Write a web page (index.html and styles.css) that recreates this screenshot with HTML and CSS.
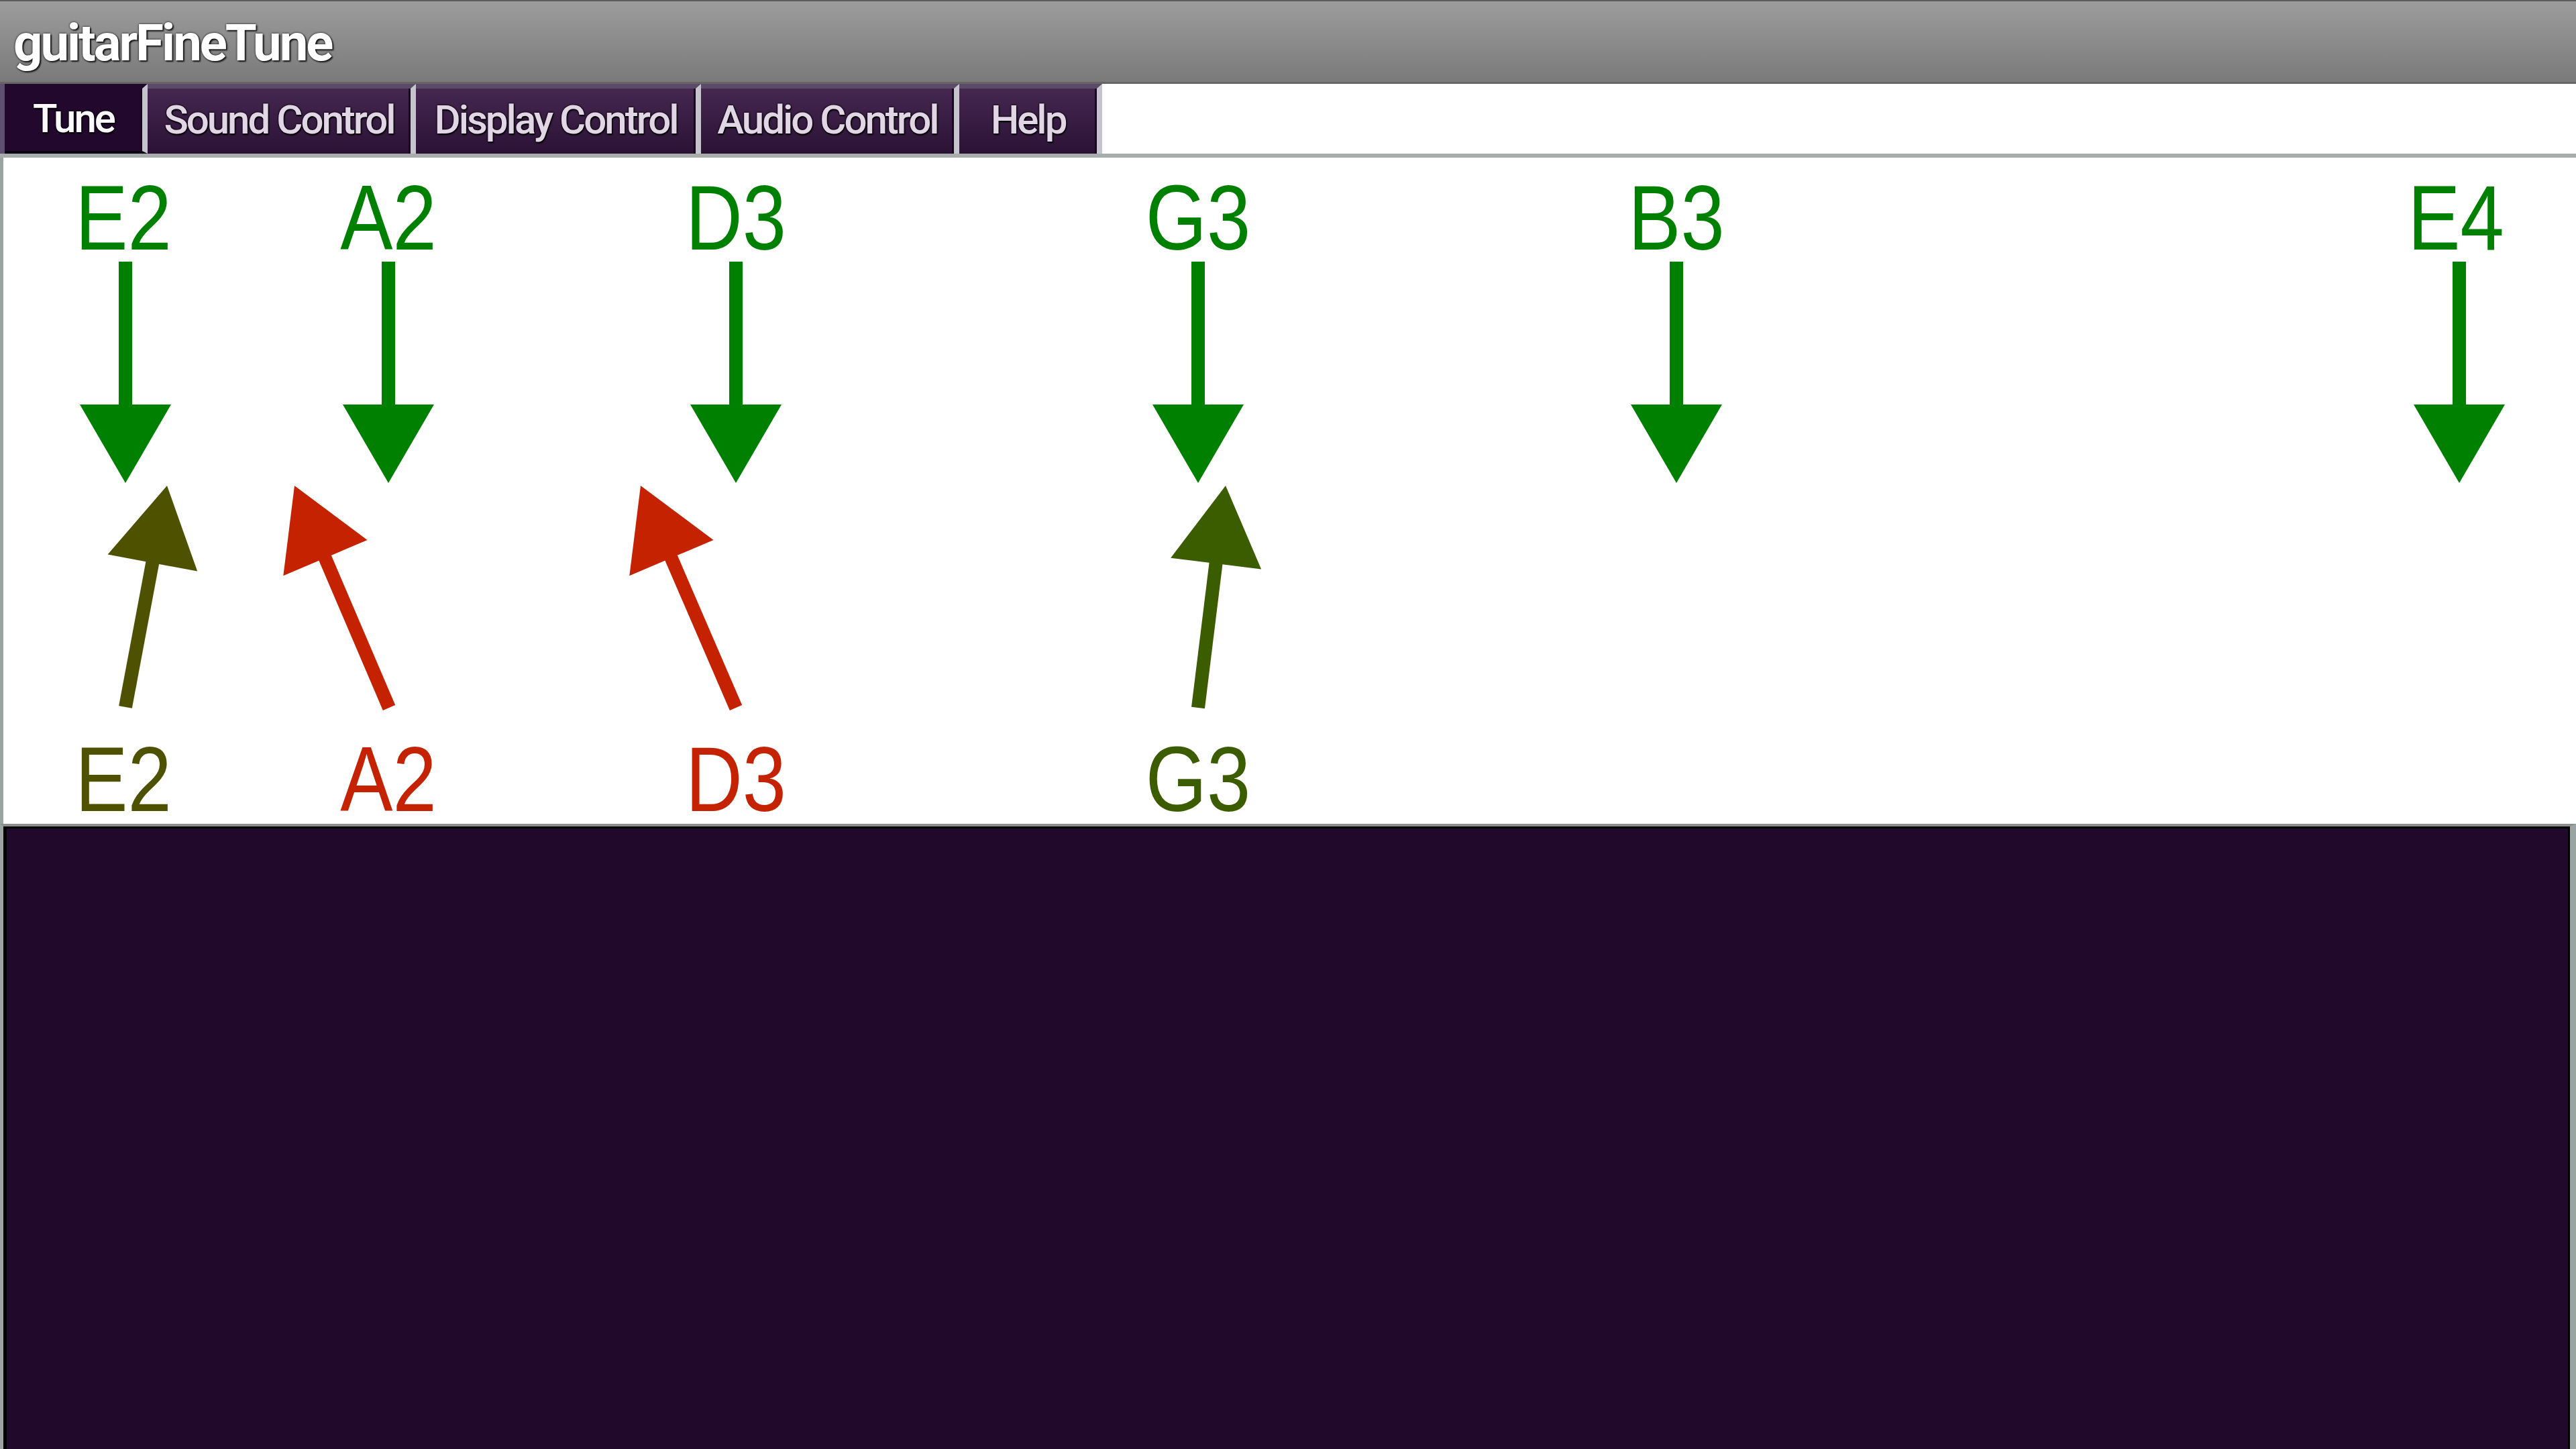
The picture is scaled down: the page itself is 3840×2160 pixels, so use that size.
FILE: index.html
```html
<!DOCTYPE html>
<html>
<head>
<meta charset="utf-8">
<title>guitarFineTune</title>
<link rel="stylesheet" href="styles.css">
</head>
<body>
<div class="app">
  <header class="titlebar"><span class="title">guitarFineTune</span></header>
  <nav class="tabs">
    <div class="tabs-start"></div>
    <div class="tab tab-tune active">Tune</div>
    <div class="tab tab-sound">Sound Control</div>
    <div class="tab tab-display">Display Control</div>
    <div class="tab tab-audio">Audio Control</div>
    <div class="tab tab-help">Help</div>
  </nav>
  <section class="tune-panel">
    <svg class="tuner" viewBox="5 235 3835 993" width="3835" height="993" xmlns="http://www.w3.org/2000/svg">
      <g class="target" fill="#008000">
        <g transform="translate(187,0)">
          <rect x="-10" y="390" width="20" height="214"/>
          <polygon points="-68,603 68,603 0,720"/>
          <text class="lbl" transform="translate(-3,372) scale(0.85,1)">E2</text>
        </g>
        <g transform="translate(579,0)">
          <rect x="-10" y="390" width="20" height="214"/>
          <polygon points="-68,603 68,603 0,720"/>
          <text class="lbl" transform="translate(0,372) scale(0.85,1)">A2</text>
        </g>
        <g transform="translate(1097,0)">
          <rect x="-10" y="390" width="20" height="214"/>
          <polygon points="-68,603 68,603 0,720"/>
          <text class="lbl" transform="translate(0,372) scale(0.85,1)">D3</text>
        </g>
        <g transform="translate(1786,0)">
          <rect x="-10" y="390" width="20" height="214"/>
          <polygon points="-68,603 68,603 0,720"/>
          <text class="lbl" transform="translate(0,372) scale(0.85,1)">G3</text>
        </g>
        <g transform="translate(2499,0)">
          <rect x="-10" y="390" width="20" height="214"/>
          <polygon points="-68,603 68,603 0,720"/>
          <text class="lbl" transform="translate(0,372) scale(0.85,1)">B3</text>
        </g>
        <g transform="translate(3666,0)">
          <rect x="-10" y="390" width="20" height="214"/>
          <polygon points="-68,603 68,603 0,720"/>
          <text class="lbl" transform="translate(-5,372) scale(0.85,1)">E4</text>
        </g>
      </g>

      <g class="detected" fill="#4e5100" stroke="#4e5100">
        <line x1="187" y1="1054" x2="228" y2="835" stroke-width="20"/>
        <polygon stroke="none" points="249,724 160.6,826.4 294.2,851.6"/>
        <text class="lbl" stroke="none" transform="translate(184,1209) scale(0.85,1)">E2</text>
      </g>
      <g class="detected" fill="#c42200" stroke="#c42200">
        <line x1="580" y1="1055" x2="483" y2="828" stroke-width="20"/>
        <polygon stroke="none" points="439,724 547.5,805 422.3,858.2"/>
        <text class="lbl" stroke="none" transform="translate(579,1209) scale(0.85,1)">A2</text>
      </g>
      <g class="detected" fill="#c42200" stroke="#c42200">
        <line x1="1097" y1="1055" x2="999" y2="828" stroke-width="20"/>
        <polygon stroke="none" points="955,724 1063.5,805 938.3,858.2"/>
        <text class="lbl" stroke="none" transform="translate(1097,1209) scale(0.85,1)">D3</text>
      </g>
      <g class="detected" fill="#3b5d00" stroke="#3b5d00">
        <line x1="1786" y1="1055" x2="1813" y2="836" stroke-width="20"/>
        <polygon stroke="none" points="1827,724 1745.1,831.7 1880.1,848.5"/>
        <text class="lbl" stroke="none" transform="translate(1786,1209) scale(0.85,1)">G3</text>
      </g>
    </svg>
  </section>
  <section class="spectrum"></section>
</div>
</body>
</html>
```
FILE: styles.css
```css
html, body {
  margin: 0;
  padding: 0;
  width: 3840px;
  height: 2160px;
  overflow: hidden;
  background: #ffffff;
}

.app {
  display: flex;
  flex-direction: column;
  width: 3840px;
  height: 2160px;
  font-family: Roboto, "Liberation Sans", sans-serif;
}

.titlebar {
  height: 120px;
  flex: none;
  display: flex;
  align-items: flex-start;
  background: linear-gradient(#9c9c9c, #7a7a7a);
  border-top: 2px solid #5c5c5c;
  border-bottom: 3px solid #666666;
  box-sizing: content-box;
}

.title {
  margin-left: 20px;
  margin-top: 17px;
  font-size: 76px;
  line-height: 90px;
  font-weight: 700;
  letter-spacing: -3px;
  color: #ffffff;
  text-shadow: 0 0 3px #000, 2px 2px 2px #222;
}

.tabs {
  flex: none;
  display: flex;
  height: 104px;
  background: #ffffff;
  border-bottom: 6px solid #a9acac;
}

.tabs-start {
  width: 7px;
  background: #5e5070;
}

.tab {
  box-sizing: border-box;
  height: 104px;
  display: flex;
  align-items: center;
  justify-content: center;
  padding-bottom: 4px;
  background: linear-gradient(#452750, #2b1235);
  border-top: 7px solid #5b4b68;
  border-right: 8px solid #c5c3cc;
  box-shadow: inset -3px 0 0 #1a0820;
  font-size: 60px;
  font-weight: 500;
  letter-spacing: -3px;
  color: #e2d6e6;
  text-shadow: 0 0 3px #000, 0 0 2px #000, 1px 2px 2px #000;
}

.tab.active {
  background: #22082c;
  border-top-color: #22082c;
  color: #fbf8fb;
  border-bottom: 4px solid #0a0010;
}

.tab-tune { width: 213px; }
.tab-sound { width: 400px; }
.tab-display { width: 425px; }
.tab-audio { width: 385px; }
.tab-help { width: 213px; }

.tune-panel {
  flex: none;
  height: 993px;
  border-left: 5px solid #9ca3a3;
  background: #ffffff;
}

.tuner {
  display: block;
}

.lbl {
  font-family: "Liberation Sans", Arial, sans-serif;
  font-size: 138px;
  text-anchor: middle;
}

.spectrum {
  flex: 1;
  background: #20092b;
  border-top: 4px solid #8e8e8e;
  border-left: 5px solid #9ca3a3;
  border-right: 9px solid #9ca3a3;
  box-shadow: inset 5px 3px 0 0 #000000, inset -3px 0 0 0 #000000;
}
```
